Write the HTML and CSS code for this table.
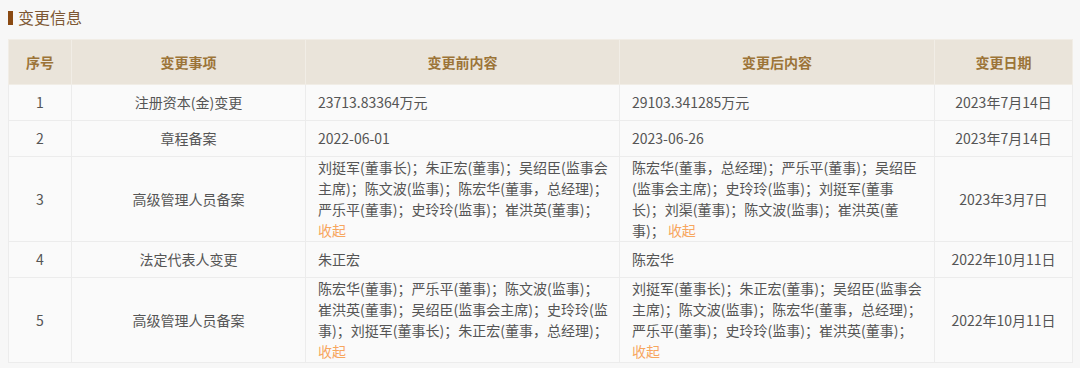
FILE: index.html
```
<!DOCTYPE html>
<html lang="zh-CN">
<head>
<meta charset="utf-8">
<title>变更信息</title>
<link rel="stylesheet" href="styles.css">
</head>
<body>
<section class="panel">
  <h2 class="title"><span class="title-bar"></span>变更信息</h2>
  <table class="changes">
    <colgroup>
      <col class="c-seq"><col class="c-item"><col class="c-before"><col class="c-after"><col class="c-date">
    </colgroup>
    <thead>
      <tr><th>序号</th><th>变更事项</th><th>变更前内容</th><th>变更后内容</th><th>变更日期</th></tr>
    </thead>
    <tbody>
      <tr>
        <td class="center">1</td>
        <td class="center">注册资本(金)变更</td>
        <td class="text">23713.83364万元</td>
        <td class="text">29103.341285万元</td>
        <td class="center">2023年7月14日</td>
      </tr>
      <tr>
        <td class="center">2</td>
        <td class="center">章程备案</td>
        <td class="text">2022-06-01</td>
        <td class="text">2023-06-26</td>
        <td class="center">2023年7月14日</td>
      </tr>
      <tr>
        <td class="center">3</td>
        <td class="center">高级管理人员备案</td>
        <td class="text">刘挺军(董事长)；朱正宏(董事)；吴绍臣(监事会<br>主席)；陈文波(监事)；陈宏华(董事，总经理)；<br>严乐平(董事)；史玲玲(监事)；崔洪英(董事)；<br><a class="toggle">收起</a></td>
        <td class="text">陈宏华(董事，总经理)；严乐平(董事)；吴绍臣<br>(监事会主席)；史玲玲(监事)；刘挺军(董事<br>长)；刘渠(董事)；陈文波(监事)；崔洪英(董<br>事)；&nbsp;<a class="toggle">收起</a></td>
        <td class="center">2023年3月7日</td>
      </tr>
      <tr>
        <td class="center">4</td>
        <td class="center">法定代表人变更</td>
        <td class="text">朱正宏</td>
        <td class="text">陈宏华</td>
        <td class="center">2022年10月11日</td>
      </tr>
      <tr>
        <td class="center">5</td>
        <td class="center">高级管理人员备案</td>
        <td class="text">陈宏华(董事)；严乐平(董事)；陈文波(监事)；<br>崔洪英(董事)；吴绍臣(监事会主席)；史玲玲(监<br>事)；刘挺军(董事长)；朱正宏(董事，总经理)；<br><a class="toggle">收起</a></td>
        <td class="text">刘挺军(董事长)；朱正宏(董事)；吴绍臣(监事会<br>主席)；陈文波(监事)；陈宏华(董事，总经理)；<br>严乐平(董事)；史玲玲(监事)；崔洪英(董事)；<br><a class="toggle">收起</a></td>
        <td class="center">2022年10月11日</td>
      </tr>
    </tbody>
  </table>
</section>
</body>
</html>
```
FILE: styles.css
```
html, body {
  margin: 0;
  padding: 0;
  background: #f7f7f7;
}
body {
  padding: 8px;
  font-family: "Noto Sans CJK SC", "Noto Sans", "Liberation Sans", sans-serif;
  color: #555555;
}
.title {
  display: flex;
  align-items: center;
  gap: 5px;
  margin: 0 0 12px 0;
  height: 19px;
  font-size: 16px;
  font-weight: normal;
  line-height: 19px;
  color: #7d5733;
}
.title-bar {
  display: inline-block;
  width: 5px;
  height: 14px;
  background: #8a4a13;
}
.changes {
  width: 100%;
  table-layout: fixed;
  border-collapse: collapse;
  background: #fafafa;
  font-size: 14px;
  line-height: 21px;
}
.c-seq { width: 63px; }
.c-item { width: 234px; }
.c-before { width: 314px; }
.c-after { width: 315px; }
.c-date { width: 138px; }
.changes th,
.changes td {
  border: 1px solid #ececec;
  vertical-align: middle;
}
.changes th {
  height: 44px;
  padding: 0;
  background: #eae4da;
  color: #9c7438;
  font-weight: bold;
  text-align: center;
  border-color: #f1ede6;
}
.changes td {
  height: 35px;
  padding: 0 12px;
  color: #555555;
}
.changes td.center {
  text-align: center;
}
.changes td.text {
  text-align: left;
  white-space: nowrap;
}
.toggle {
  color: #f7a65e;
  cursor: pointer;
}
```
